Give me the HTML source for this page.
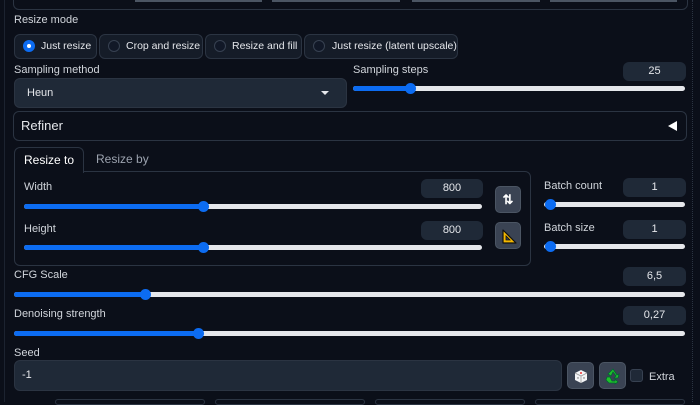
<!DOCTYPE html>
<html><head><meta charset="utf-8"><style>
*{box-sizing:border-box;margin:0;padding:0}
body{width:700px;height:402px;background:#0b0f19;overflow:hidden;position:relative;font-family:"Liberation Sans",sans-serif;color:#d1d5db;font-size:11px}
.a{position:absolute}
.lbl{position:absolute;font-size:11px;color:#d1d5db;line-height:12px;white-space:nowrap}
.num{position:absolute;width:63px;height:19px;background:#1f2937;border-radius:6px;color:#e5e7eb;text-align:center;font-size:11px;line-height:19px}
.tr{position:absolute;height:5px;background:#e5e7eb;border-radius:3px}
.fill{position:absolute;left:0;top:0;height:5px;background:#0c6cf2;border-radius:3px}
.th{position:absolute;top:-3px;width:11px;height:11px;border-radius:50%;background:#0c6cf2;margin-left:-5px}
.rad{position:absolute;top:34px;height:25px;background:#151c28;border:1px solid #2b3442;border-radius:6px;color:#e5e7eb;font-size:10.5px;line-height:23px;padding-left:26px;white-space:nowrap;overflow:hidden}
.rad i{position:absolute;left:8px;top:5px;width:12px;height:12px;border-radius:50%;background:#111827;border:1px solid #374151}
.btn{position:absolute;width:26px;height:27px;background:#3a4353;border-radius:5px;border:1px solid #4b5563}
</style></head><body>
<div class="a" style="left:4px;top:0;width:1px;height:402px;background:#1c2330"></div>
<div class="a" style="left:692px;top:0;width:1px;height:402px;border-left:1px dotted #2b3442"></div>
<div class="a" style="left:13px;top:-10px;width:675px;height:20px;border:1px solid #2b3442;border-radius:6px"></div>
<div class="a" style="left:135px;top:0;width:127px;height:2px;background:#4b5563"></div>
<div class="a" style="left:272px;top:0;width:128px;height:2px;background:#4b5563"></div>
<div class="a" style="left:412px;top:0;width:128px;height:2px;background:#4b5563"></div>
<div class="a" style="left:550px;top:0;width:127px;height:2px;background:#4b5563"></div>

<div class="lbl" style="left:14px;top:14px">Resize mode</div>
<div class="rad" style="left:14px;width:83px;padding-left:26px"><i style="background:#0c6cf2;border-color:#0c6cf2"><b style="position:absolute;left:3px;top:3px;width:4px;height:4px;border-radius:50%;background:#fff"></b></i>Just resize</div>
<div class="rad" style="left:99px;width:104px;padding-left:26px"><i></i>Crop and resize</div>
<div class="rad" style="left:205px;width:97px;padding-left:26px"><i></i>Resize and fill</div>
<div class="rad" style="left:304px;width:154px;padding-left:27px"><i></i>Just resize (latent upscale)</div>

<div class="lbl" style="left:14px;top:64px">Sampling method</div>
<div class="a" style="left:14px;top:78px;width:333px;height:30px;background:#1f2937;border-radius:6px;border:1px solid #2b3442;color:#e5e7eb;line-height:28px;padding-left:12px">Heun<span style="position:absolute;left:306px;top:12px;width:0;height:0;border-left:4px solid transparent;border-right:4px solid transparent;border-top:4px solid #e5e7eb"></span></div>

<div class="lbl" style="left:353px;top:64px">Sampling steps</div>
<div class="num" style="left:623px;top:62px">25</div>
<div class="tr" style="left:353px;top:86px;width:332px"><div class="fill" style="width:57px"></div><div class="th" style="left:57px"></div></div>

<div class="a" style="left:13px;top:111px;width:674px;height:30px;border:1px solid #2b3442;border-radius:6px;color:#e5e7eb;font-size:13px;line-height:28px;padding-left:7px">Refiner<span style="position:absolute;left:654px;top:9px;width:0;height:0;border-top:5px solid transparent;border-bottom:5px solid transparent;border-right:9px solid #fff"></span></div>

<div class="a" style="left:14px;top:171px;width:517px;height:95px;border:1px solid #2b3442;border-radius:0 6px 6px 6px"></div>
<div class="a" style="left:14px;top:147px;width:70px;height:26px;border:1px solid #2b3442;border-bottom:none;border-radius:6px 6px 0 0;background:#0b0f19;color:#fff;font-size:12px;line-height:24px;text-align:center">Resize to</div>
<div class="a" style="left:96px;top:152px;color:#9ca3af;font-size:12px">Resize by</div>

<div class="lbl" style="left:24px;top:181px">Width</div>
<div class="num" style="left:421px;top:179px;width:62px">800</div>
<div class="tr" style="left:24px;top:204px;width:458px"><div class="fill" style="width:179px"></div><div class="th" style="left:179px"></div></div>
<div class="lbl" style="left:24px;top:223px">Height</div>
<div class="num" style="left:421px;top:221px;width:62px">800</div>
<div class="tr" style="left:24px;top:245px;width:458px"><div class="fill" style="width:179px"></div><div class="th" style="left:179px"></div></div>

<div class="btn" style="left:495px;top:186px;color:#fff;font-size:13px;text-align:center;line-height:25px;font-weight:bold">⇅</div>
<div class="btn" style="left:495px;top:222px"><svg width="26" height="27" viewBox="0 0 26 27"><path d="M7 7 L7 20 L20 20 Z" fill="#f5b800" stroke="#111" stroke-width="1.2" stroke-linejoin="round"/><path d="M10 13 L10 17 L14 17 Z" fill="#3a4353" stroke="#111" stroke-width="0.8"/></svg></div>

<div class="lbl" style="left:544px;top:180px">Batch count</div>
<div class="num" style="left:623px;top:178px">1</div>
<div class="tr" style="left:544px;top:202px;width:141px"><div class="th" style="left:6px"></div></div>
<div class="lbl" style="left:544px;top:222px">Batch size</div>
<div class="num" style="left:623px;top:220px">1</div>
<div class="tr" style="left:544px;top:244px;width:141px"><div class="th" style="left:6px"></div></div>

<div class="lbl" style="left:14px;top:269px">CFG Scale</div>
<div class="num" style="left:623px;top:267px">6,5</div>
<div class="tr" style="left:14px;top:292px;width:671px"><div class="fill" style="width:131px"></div><div class="th" style="left:131px"></div></div>

<div class="lbl" style="left:14px;top:308px">Denoising strength</div>
<div class="num" style="left:623px;top:306px">0,27</div>
<div class="tr" style="left:14px;top:331px;width:671px"><div class="fill" style="width:184px"></div><div class="th" style="left:184px"></div></div>

<div class="lbl" style="left:14px;top:347px">Seed</div>
<div class="a" style="left:14px;top:360px;width:548px;height:31px;background:#1f2937;border-radius:6px;border:1px solid #2b3442;color:#e5e7eb;line-height:29px;padding-left:7px">-1</div>
<div class="btn" style="left:567px;top:362px;width:27px"><svg width="26" height="27" viewBox="0 0 26 27"><path d="M7 10 L13 7 L19 10 L19 17 L13 20 L7 17 Z" fill="#f3f4f6"/><path d="M7 10 L13 13 L19 10 M13 13 L13 20" stroke="#999" fill="none" stroke-width="0.8"/><circle cx="13" cy="10" r="1" fill="#e33"/><circle cx="10" cy="15" r="0.7" fill="#666"/><circle cx="16" cy="15" r="0.7" fill="#666"/></svg></div>
<div class="btn" style="left:599px;top:362px;width:27px"><svg width="26" height="27" viewBox="0 0 26 27"><path d="M13 6 L17 12 L19 11 L18 15 L14 15 L16 13 L13 9 L11 13 L8 11 Z" fill="#1fc12a" stroke="#063" stroke-width="0.8"/><path d="M7 14 L10 14 L12 18 L15 18 L15 16 L18 19 L15 21 L15 20 L9 20 L6 17 Z" fill="#1fc12a" stroke="#063" stroke-width="0.8"/></svg></div>
<div class="a" style="left:630px;top:369px;width:13px;height:13px;background:#1f2937;border:1px solid #374151;border-radius:3px"></div>
<div class="lbl" style="left:649px;top:371px">Extra</div>

<div class="a" style="left:55px;top:399px;width:150px;height:6px;border:1px solid #2b3442;border-radius:5px"></div>
<div class="a" style="left:215px;top:399px;width:150px;height:6px;border:1px solid #2b3442;border-radius:5px"></div>
<div class="a" style="left:375px;top:399px;width:150px;height:6px;border:1px solid #2b3442;border-radius:5px"></div>
<div class="a" style="left:535px;top:399px;width:150px;height:6px;border:1px solid #2b3442;border-radius:5px"></div>
</body></html>
